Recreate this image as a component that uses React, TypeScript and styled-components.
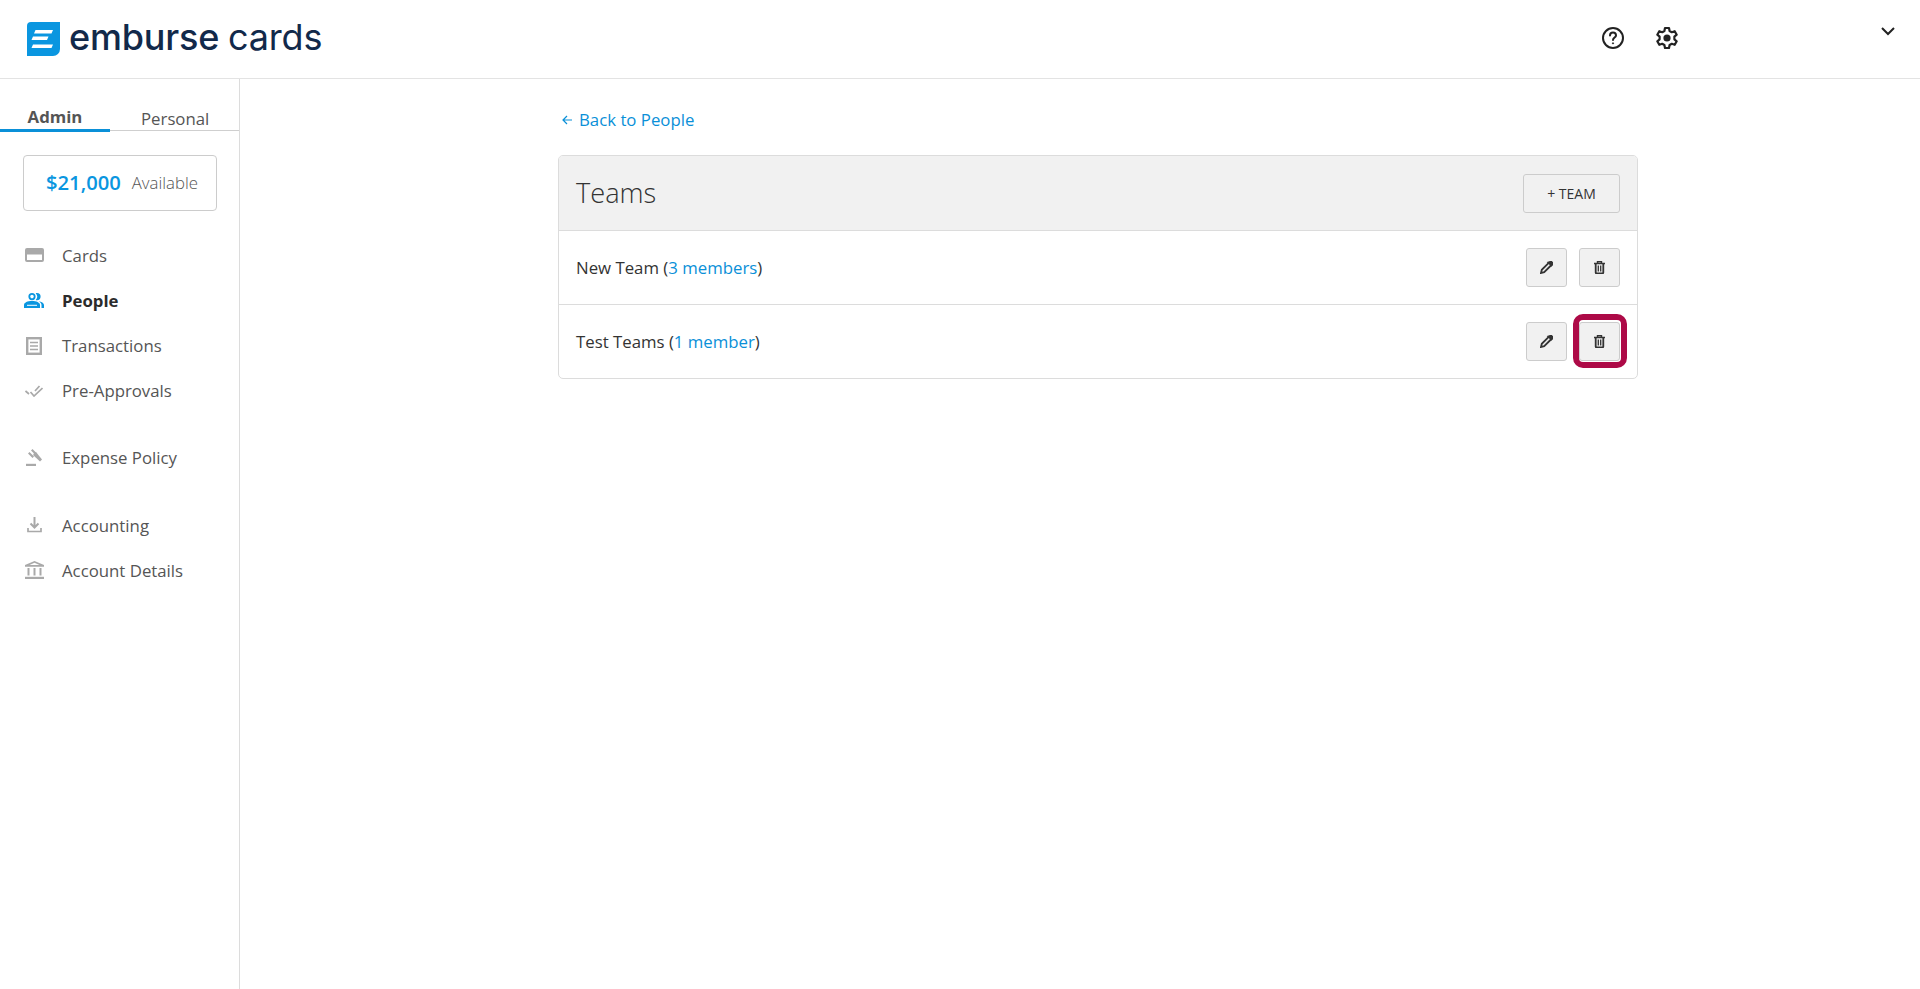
import styled, { createGlobalStyle } from "styled-components";

const GlobalStyle = createGlobalStyle`
  html, body {
    margin: 0;
    padding: 0;
    background: #fff;
    font-family: "Open Sans", "Liberation Sans", sans-serif;
    color: #333;
  }
  * {
    box-sizing: border-box;
  }
`;

const Page = styled.div`
  display: flex;
  flex-direction: column;
  height: 989px;
  overflow: hidden;
`;

const Header = styled.header`
  display: flex;
  align-items: flex-start;
  height: 79px;
  flex-shrink: 0;
  border-bottom: 1px solid #e3e3e3;
  padding-left: 27px;
`;

const Logo = styled.div`
  display: flex;
  align-items: center;
  gap: 9px;
  height: 78px;
`;

const LogoWord = styled.span`
  font-family: "Inter", "Noto Sans", sans-serif;
  font-size: 36px;
  line-height: 1;
  color: #12294a;
  margin-top: -5px;
  letter-spacing: -0.2px;
  strong {
    font-weight: 500;
    margin-right: 9px;
  }
  span {
    font-weight: 400;
  }
`;

const HeaderIcons = styled.div`
  display: flex;
  align-items: center;
  gap: 30px;
  margin-left: auto;
  height: 76px;
  margin-right: 202px;
  color: #222;
`;

const Caret = styled.div`
  margin-right: 25px;
  margin-top: 27px;
  color: #222;
  line-height: 0;
`;

const Body = styled.div`
  display: flex;
  flex: 1;
  min-height: 0;
`;

const Sidebar = styled.aside`
  width: 240px;
  flex-shrink: 0;
  border-right: 1px solid #dcdcdc;
`;

const Tabs = styled.div`
  display: flex;
  height: 52px;
  border-bottom: 1px solid #cfcfcf;
`;

const Tab = styled.div<{ $active?: boolean }>`
  width: ${({ $active }) => ($active ? "110px" : "129px")};
  height: ${({ $active }) => ($active ? "53px" : "51px")};
  padding-top: ${({ $active }) => ($active ? "27px" : "29px")};
  padding-left: ${({ $active }) => ($active ? "0" : "31px")};
  text-align: ${({ $active }) => ($active ? "center" : "left")};
  font-size: 16.8px;
  line-height: 22px;
  font-weight: ${({ $active }) => ($active ? 700 : 400)};
  color: #555;
  border-bottom: ${({ $active }) => ($active ? "3px solid #0a90d8" : "none")};
`;

const Balance = styled.div`
  display: flex;
  align-items: center;
  justify-content: center;
  gap: 11px;
  width: 194px;
  height: 56px;
  margin: 24px 0 0 23px;
  padding: 0 0 2px 4px;
  border: 1px solid #ccc;
  border-radius: 4px;
`;

const Amount = styled.span`
  font-size: 20.2px;
  font-weight: 600;
  color: #0a96e0;
`;

const Available = styled.span`
  font-size: 16.8px;
  font-weight: 300;
  color: #555;
`;

const Nav = styled.nav`
  display: flex;
  flex-direction: column;
  margin-top: 21.6px;
`;

const NavItem = styled.div<{ $active?: boolean; $gap?: number }>`
  display: flex;
  align-items: center;
  height: 45.2px;
  padding-left: 24px;
  margin-top: ${({ $gap }) => $gap ?? 0}px;
  font-size: 16.8px;
  font-weight: ${({ $active }) => ($active ? 700 : 400)};
  color: ${({ $active }) => ($active ? "#2b2b2b" : "#555")};
`;

const NavIcon = styled.span<{ $active?: boolean }>`
  display: flex;
  align-items: center;
  justify-content: center;
  width: 20px;
  height: 20px;
  margin-right: 18px;
  color: ${({ $active }) => ($active ? "#0a96e0" : "#a9a9a9")};
`;

const Main = styled.main`
  flex: 1;
  padding: 30px 0 0 318px;
`;

const BackLink = styled.div`
  display: flex;
  align-items: center;
  gap: 7px;
  height: 22px;
  padding-left: 4px;
  font-size: 16.8px;
  line-height: 22px;
  color: #0a90d8;
`;

const Card = styled.section`
  width: 1080px;
  margin-top: 24px;
  border: 1px solid #dcdcdc;
  border-radius: 5px;
  overflow: hidden;
`;

const CardHeader = styled.div`
  display: flex;
  align-items: center;
  justify-content: space-between;
  height: 75px;
  padding: 0 17px;
  background: #f1f1f1;
  border-bottom: 1px solid #dcdcdc;
`;

const Title = styled.h1`
  margin: 0 0 2px;
  font-size: 27.2px;
  font-weight: 300;
  color: #333;
`;

const AddButton = styled.button`
  width: 97px;
  height: 39px;
  font-family: inherit;
  font-size: 14px;
  color: #333;
  background: #f1f1f1;
  border: 1px solid #ccc;
  border-radius: 3px;
`;

const Row = styled.div`
  display: flex;
  align-items: center;
  justify-content: space-between;
  height: 73px;
  padding: 0 17px;
  font-size: 16.8px;
  color: #333;
  & + & {
    height: 74px;
    border-top: 1px solid #dcdcdc;
  }
  a {
    color: #0a90d8;
  }
`;

const RowActions = styled.div`
  display: flex;
  gap: 12px;
`;

const IconButton = styled.button<{ $focused?: boolean }>`
  position: relative;
  display: flex;
  align-items: center;
  justify-content: center;
  width: 41px;
  height: 39px;
  padding: 0;
  background: #f1f1f1;
  border: 1px solid #ccc;
  border-radius: 3px;
  color: #333;
  ${({ $focused }) =>
    $focused &&
    `
    &::after {
      content: "";
      position: absolute;
      inset: -9px -8px -8px -7px;
      border: 6px solid #ad0a47;
      border-radius: 10px;
    }
  `}
`;

const LogoMark = () => (
  <svg width="33" height="34" viewBox="0 0 33 34">
    <path d="M4 0H33V27a7 7 0 0 1-7 7H0V4a4 4 0 0 1 4-4z" fill="#0a96e0" />
    <path d="M8.5 8H26L24.5 11.5H7z M6 14.5H21.5L20 18H4.5z M6 22.5H26L24.5 26H4.5z" fill="#fff" />
  </svg>
);

const HelpIcon = () => (
  <svg width="24" height="24" viewBox="0 0 24 24" fill="none" stroke="currentColor" strokeWidth="2">
    <circle cx="12" cy="12" r="10" />
    <path d="M9 9.5a3 3 0 0 1 6 0c0 2-3 2.2-3 4.5" strokeLinecap="round" />
    <circle cx="12" cy="17.3" r="0.6" fill="currentColor" strokeWidth="1" />
  </svg>
);

const GearIcon = () => (
  <svg width="24" height="24" viewBox="0 0 24 24" fill="none" stroke="currentColor" strokeWidth="2.2" strokeLinejoin="round">
    <path d="M10 2h4l.6 3 2.2 1.2 2.9-1 2 3.5-2.3 2v2.6l2.3 2-2 3.5-2.9-1-2.2 1.2-.6 3h-4l-.6-3-2.2-1.2-2.9 1-2-3.5 2.3-2v-2.6l-2.3-2 2-3.5 2.9 1L9.4 5z" />
    <circle cx="12" cy="12" r="3.6" fill="currentColor" stroke="none" />
  </svg>
);

const CaretIcon = () => (
  <svg width="14" height="9" viewBox="0 0 14 9" fill="none" stroke="currentColor" strokeWidth="2">
    <path d="M1 1l6 6 6-6" />
  </svg>
);

const CardIcon = () => (
  <svg width="19" height="14" viewBox="0 0 19 14" fill="currentColor">
    <path d="M2 0h15a2 2 0 0 1 2 2v10a2 2 0 0 1-2 2H2a2 2 0 0 1-2-2V2a2 2 0 0 1 2-2zm0 6.5V12h15V6.5z" fillRule="evenodd" />
  </svg>
);

const PeopleIcon = () => (
  <svg width="20" height="15" viewBox="0 0 20 15" fill="currentColor">
    <path d="M8 0a3.6 3.6 0 1 1 0 7.2a3.6 3.6 0 0 1 0-7.2zm0 1.8a1.8 1.8 0 1 0 0 3.6a1.8 1.8 0 0 0 0-3.6z" fillRule="evenodd" />
    <path d="M13 0a3.6 3.6 0 0 1 0 7.2c-.5 0-.9-.1-1.3-.2a5 5 0 0 0 0-6.8c.4-.1.8-.2 1.3-.2z" />
    <path d="M0 15v-3c0-2.5 3.5-4 8-4s8 1.5 8 4v3z" />
    <path d="M14.5 8.2c3 .4 5.5 1.700 5.500 3.800v3h-2.500v-3c0-1.500-1-2.800-3-3.800z" />
    <path d="M3 11.800h10v1H3z" fill="#fff" />
  </svg>
);

const ReceiptIcon = () => (
  <svg width="16" height="18" viewBox="0 0 16 18" fill="none" stroke="currentColor" strokeWidth="1.5">
    <rect x="1.2" y="1.2" width="13.6" height="15.6" strokeWidth="2.4" />
    <path d="M4 5.5h8M4 9h8M4 12.5h8" />
  </svg>
);

const ChecksIcon = () => (
  <svg width="18" height="12" viewBox="0 0 18 12" fill="none" stroke="currentColor" strokeWidth="1.7">
    <path d="M0.5 6l3.5 3M5.5 7l3.5 4L17.5 3M10 6l4.5-5" />
  </svg>
);

const GavelIcon = () => (
  <svg width="16" height="17" viewBox="0 0 16 17" fill="currentColor">
    <path d="M6.5 0l4.500 4.500-1.500 1.500L5 1.500zM3.500 3l4.500 4.500L6.500 9 2 4.500z" />
    <path d="M8 4.500l2-1.500 6 7.500-2 2-7-6.500z" />
    <rect x="0" y="14.8" width="10" height="2.2" />
  </svg>
);

const DownloadIcon = () => (
  <svg width="15" height="16" viewBox="0 0 15 16" fill="none" stroke="currentColor" strokeWidth="2">
    <path d="M7.5 0v10.500M3.500 6.500l4 4 4-4" />
    <path d="M1 11v3.500h13V11" strokeWidth="1.7" />
  </svg>
);

const BankIcon = () => (
  <svg width="19" height="18" viewBox="0 0 19 18" fill="currentColor">
    <path d="M9.5 0L19 4v1.800H0V4zM9.500 1.800L4.500 4h10z" fillRule="evenodd" />
    <rect x="2.5" y="7" width="2" height="7.5" />
    <rect x="8.5" y="7" width="2" height="7.5" />
    <rect x="14.5" y="7" width="2" height="7.5" />
    <rect x="0" y="15.8" width="19" height="2.2" />
  </svg>
);

const BackArrow = () => (
  <svg width="10" height="10" viewBox="0 0 10 10" fill="none" stroke="currentColor" strokeWidth="1.2">
    <path d="M10 5H1M5 1L1 5l4 4" />
  </svg>
);

const PencilIcon = () => (
  <svg width="13" height="13" viewBox="0 0 13 13" fill="none" stroke="currentColor" strokeWidth="1.8">
    <path d="M1 12l.8-3.200L9 1.600a1 1 0 0 1 1.400 0l1 1a1 1 0 0 1 0 1.400L4.200 11.200z" />
    <path d="M8.500 1.500L11.500 4.500l1-1.200a1 1 0 0 0 0-1.400l-.8-.8a1 1 0 0 0-1.400 0z" fill="currentColor" />
  </svg>
);

const TrashIcon = () => (
  <svg width="11" height="13" viewBox="0 0 11 13" fill="none" stroke="currentColor">
    <path d="M0 2.5h11" strokeWidth="1.7" />
    <path d="M3.5 2V.7h4V2" strokeWidth="1.4" />
    <path d="M1.7 3v8.600a.8.8 0 0 0 .8.8h6a.8.8 0 0 0 .8-.8V3" strokeWidth="1.8" />
    <path d="M4.3 4.500v6M6.700 4.500v6" strokeWidth="1.3" />
  </svg>
);

const navItems = [
  { label: "Cards", icon: <CardIcon />, gap: 0 },
  { label: "People", icon: <PeopleIcon />, active: true, gap: 0 },
  { label: "Transactions", icon: <ReceiptIcon />, gap: 0 },
  { label: "Pre-Approvals", icon: <ChecksIcon />, gap: 0 },
  { label: "Expense Policy", icon: <GavelIcon />, gap: 22 },
  { label: "Accounting", icon: <DownloadIcon />, gap: 22 },
  { label: "Account Details", icon: <BankIcon />, gap: 0 },
];

const teams = [
  { name: "New Team", members: "3 members" },
  { name: "Test Teams", members: "1 member", focused: true },
];

const App = () => {
  return (
    <Page>
      <GlobalStyle />
      <Header>
        <Logo>
          <LogoMark />
          <LogoWord>
            <strong>emburse</strong>
            <span>cards</span>
          </LogoWord>
        </Logo>
        <HeaderIcons>
          <HelpIcon />
          <GearIcon />
        </HeaderIcons>
        <Caret>
          <CaretIcon />
        </Caret>
      </Header>
      <Body>
        <Sidebar>
          <Tabs>
            <Tab $active>Admin</Tab>
            <Tab>Personal</Tab>
          </Tabs>
          <Balance>
            <Amount>$21,000</Amount>
            <Available>Available</Available>
          </Balance>
          <Nav>
            {navItems.map((item) => (
              <NavItem key={item.label} $active={item.active} $gap={item.gap}>
                <NavIcon $active={item.active}>{item.icon}</NavIcon>
                {item.label}
              </NavItem>
            ))}
          </Nav>
        </Sidebar>
        <Main>
          <BackLink>
            <BackArrow />
            Back to People
          </BackLink>
          <Card>
            <CardHeader>
              <Title>Teams</Title>
              <AddButton>+ TEAM</AddButton>
            </CardHeader>
            {teams.map((team) => (
              <Row key={team.name}>
                <span>
                  {team.name} (<a>{team.members}</a>)
                </span>
                <RowActions>
                  <IconButton>
                    <PencilIcon />
                  </IconButton>
                  <IconButton $focused={team.focused}>
                    <TrashIcon />
                  </IconButton>
                </RowActions>
              </Row>
            ))}
          </Card>
        </Main>
      </Body>
    </Page>
  );
};

export default App;
